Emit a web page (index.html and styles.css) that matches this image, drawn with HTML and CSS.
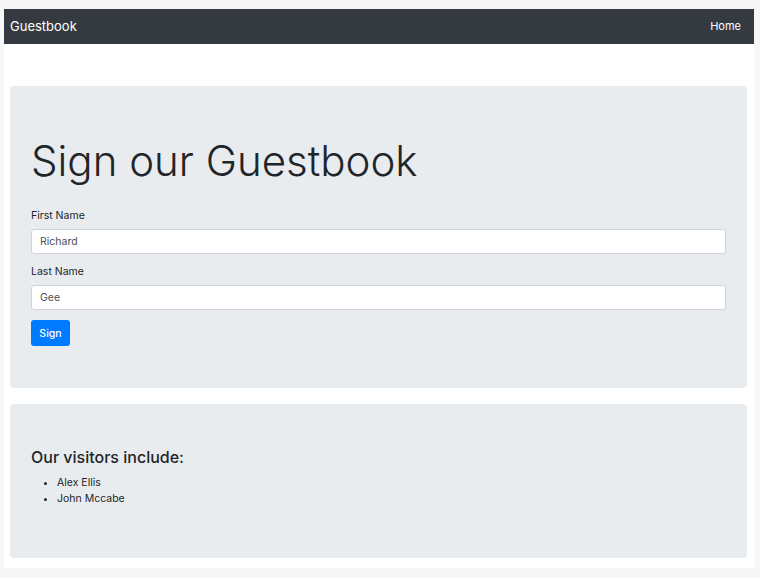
FILE: index.html
```html
<!DOCTYPE html>
<html>
<head>
<meta charset="utf-8">
<link rel="stylesheet" href="styles.css">
</head>
<body>
<div class="page">
  <nav class="navbar">
    <span class="brand">Guestbook</span>
    <a class="nav-link" href="#">Home</a>
  </nav>
  <main class="content">
    <section class="jumbo jumbo-form">
      <h1 class="display">Sign our Guestbook</h1>
      <div class="group">
        <label class="label">First Name</label>
        <input class="input" type="text" value="Richard">
      </div>
      <div class="group">
        <label class="label">Last Name</label>
        <input class="input" type="text" value="Gee">
      </div>
      <button class="btn">Sign</button>
    </section>
    <section class="jumbo jumbo-list">
      <h4 class="sub">Our visitors include:</h4>
      <ul class="visitors">
        <li>Alex Ellis</li>
        <li>John Mccabe</li>
      </ul>
    </section>
  </main>
</div>
</body>
</html>
```

FILE: styles.css
```css
html, body {
  margin: 0;
  padding: 0;
}
body {
  background: #f7f7f7;
  font-family: Inter, "Noto Sans", "Liberation Sans", sans-serif;
  color: #212529;
  padding: 9px 6px 10px 4px;
}
.page {
  background: #fff;
  width: 750px;
  height: 559px;
  box-sizing: border-box;
}
.navbar {
  height: 35px;
  background: #343a40;
  display: flex;
  align-items: center;
  justify-content: space-between;
  padding: 0 13px 2px 6px;
  box-sizing: border-box;
}
.brand {
  color: #fff;
  font-size: 13px;
}
.nav-link {
  color: #fff;
  font-size: 11px;
  text-decoration: none;
}
.content {
  padding: 42px 7px 0 6px;
  display: flex;
  flex-direction: column;
  gap: 16px;
}
.jumbo {
  background: #e9ecef;
  border-radius: 4px;
  padding: 0 21px;
}
.jumbo-form {
  height: 302px;
  box-sizing: border-box;
  padding-top: 49px;
}
.display {
  margin: 0 0 22px;
  font-size: 42px;
  font-weight: 300;
  line-height: 51px;
  letter-spacing: 0;
}
.group {
  display: flex;
  flex-direction: column;
  gap: 5px;
  margin-bottom: 10px;
}
.label {
  font-size: 10.5px;
  line-height: 16px;
}
.input {
  height: 25px;
  box-sizing: border-box;
  border: 1px solid #ced4da;
  border-radius: 3px;
  background: #fff;
  padding: 0 8px;
  font-family: inherit;
  font-size: 10.5px;
  color: #495057;
  margin: 0;
}
.btn {
  background: #007bff;
  color: #fff;
  border: none;
  border-radius: 3px;
  font-family: inherit;
  font-size: 10.5px;
  font-weight: 500;
  width: 39px;
  height: 26px;
  padding: 0;
}
.jumbo-list {
  height: 154px;
  box-sizing: border-box;
  padding-top: 44px;
}
.sub {
  margin: 0 0 8px;
  font-size: 16px;
  font-weight: 500;
  line-height: 19px;
}
.visitors {
  margin: 0;
  padding-left: 26px;
  font-size: 10.5px;
  line-height: 16px;
}
```
